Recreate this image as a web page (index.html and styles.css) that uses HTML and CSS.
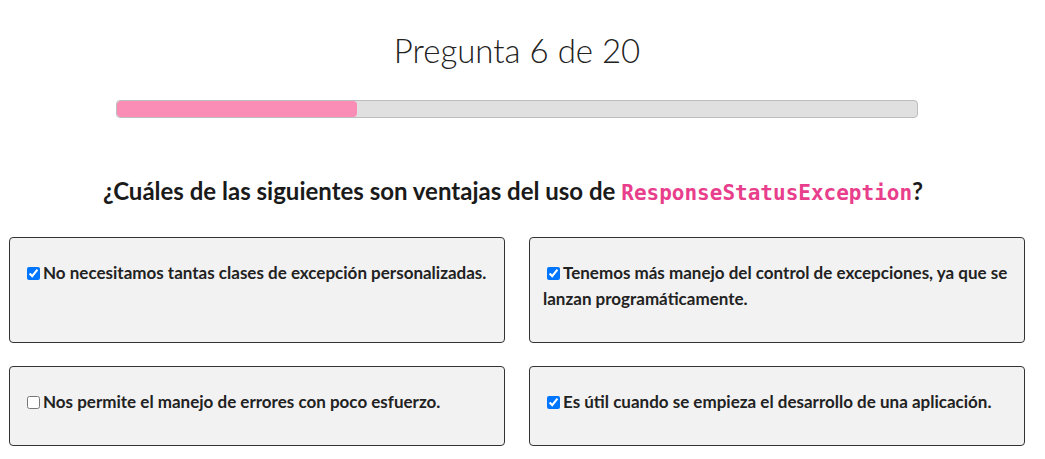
FILE: index.html
```html
<!DOCTYPE html>
<html lang="es">
<head>
<meta charset="utf-8">
<link rel="stylesheet" href="styles.css">
</head>
<body>
<main class="quiz">
  <h1 class="quiz-title">Pregunta 6 de 20</h1>
  <div class="progress"><div class="progress-fill" style="width: 30%"></div></div>
  <h2 class="question">¿Cuáles de las siguientes son ventajas del uso de <code>ResponseStatusException</code>?</h2>
  <div class="options">
    <label class="option"><input type="checkbox" checked>No necesitamos tantas clases de excepción personalizadas.</label>
    <label class="option"><input type="checkbox" checked>Tenemos más manejo del control de excepciones, ya que se lanzan programáticamente.</label>
    <label class="option"><input type="checkbox">Nos permite el manejo de errores con poco esfuerzo.</label>
    <label class="option"><input type="checkbox" checked>Es útil cuando se empieza el desarrollo de una aplicación.</label>
  </div>
</main>
</body>
</html>
```
FILE: styles.css
```css
* { box-sizing: border-box; }
body {
  margin: 0;
  background: #fff;
  font-family: Lato, "Open Sans", sans-serif;
  color: #212529;
}
.quiz {
  padding: 0 20px 0 9px;
  display: flex;
  flex-direction: column;
}
.quiz-title {
  margin: 28px 0 0;
  text-align: center;
  font-weight: 300;
  font-size: 33px;
  line-height: 44px;
  color: #222;
}
.progress {
  margin: 28px auto 0;
  width: 802px;
  height: 18px;
  background: #e0e0e0;
  border: 1px solid #bdbdbd;
  border-radius: 4px;
  overflow: hidden;
}
.progress-fill {
  height: 100%;
  background: #f98db6;
  border-radius: 4px;
}
.question {
  margin: 57px 0 0;
  padding-right: 8px;
  text-align: center;
  font-weight: 700;
  font-size: 24px;
  line-height: 32px;
  color: #1a1a1a;
}
.question code {
  font-family: "DejaVu Sans Mono", monospace;
  font-size: 21px;
  font-weight: 700;
  color: #e83e8c;
}
.options {
  margin-top: 28px;
  display: grid;
  grid-template-columns: 1fr 1fr;
  column-gap: 24px;
  row-gap: 23px;
}
.option {
  display: block;
  background: #f2f2f2;
  border: 1px solid #333;
  border-radius: 4px;
  padding: 22px 13px 30px;
  font-weight: 700;
  font-size: 17px;
  line-height: 26px;
  color: #222;
}
.option input {
  margin: 0 3px 0 4px;
  width: 13px;
  height: 13px;
  vertical-align: -1px;
}
```
